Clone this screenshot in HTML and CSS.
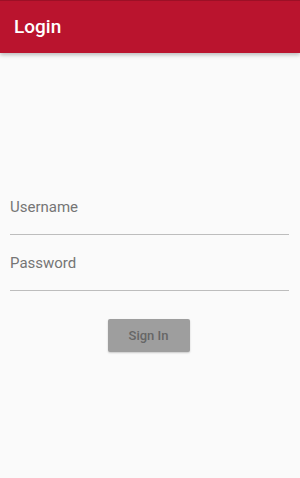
FILE: index.html
```html
<!DOCTYPE html>
<html lang="en">
<head>
    <meta charset="UTF-8">
    <meta name="viewport" content="width=device-width, initial-scale=1.0">
    <title>Login</title>
    <link rel="stylesheet" href="styles.css">
</head>
<body>
    <header class="app-bar">
        <h1>Login</h1>
    </header>
    <main class="content">
        <div class="field">
            <input type="text" placeholder="Username">
        </div>
        <div class="field">
            <input type="password" placeholder="Password">
        </div>
        <div class="actions">
            <button disabled>Sign In</button>
        </div>
    </main>
</body>
</html>
```

FILE: styles.css
```css
html, body {
    margin: 0;
    height: 100%;
}
body {
    font-family: Roboto, "Noto Sans", Arial, sans-serif;
    background-color: #fafafa;
}
.app-bar {
    height: 53px;
    background-color: #ba142e;
    border-top: 1px solid #9c1026;
    box-sizing: border-box;
    display: flex;
    align-items: center;
    padding: 0 14px;
    box-shadow: 0 2px 4px rgba(0, 0, 0, 0.25);
    position: relative;
}
.app-bar h1 {
    margin: 0;
    color: #fff;
    font-size: 19px;
    font-weight: 500;
    padding-bottom: 1px;
}
.content {
    padding: 126px 11px 0 10px;
}
.field {
    border-bottom: 1px solid #bdbdbd;
}
input {
    display: block;
    width: 100%;
    height: 55px;
    box-sizing: border-box;
    border: none;
    background: transparent;
    font-family: inherit;
    font-size: 15px;
    padding: 12px 0 12px;
    outline: none;
    color: #212121;
}
input::placeholder {
    color: #757575;
}
.actions {
    display: flex;
    justify-content: center;
    padding-top: 28px;
    padding-right: 2px;
}
button {
    width: 82px;
    height: 33px;
    border: none;
    border-radius: 2px;
    background-color: #9e9e9e;
    color: #666;
    font-family: inherit;
    font-size: 13px;
    font-weight: 500;
    box-shadow: 0 1px 2px rgba(0, 0, 0, 0.2);
}
```
